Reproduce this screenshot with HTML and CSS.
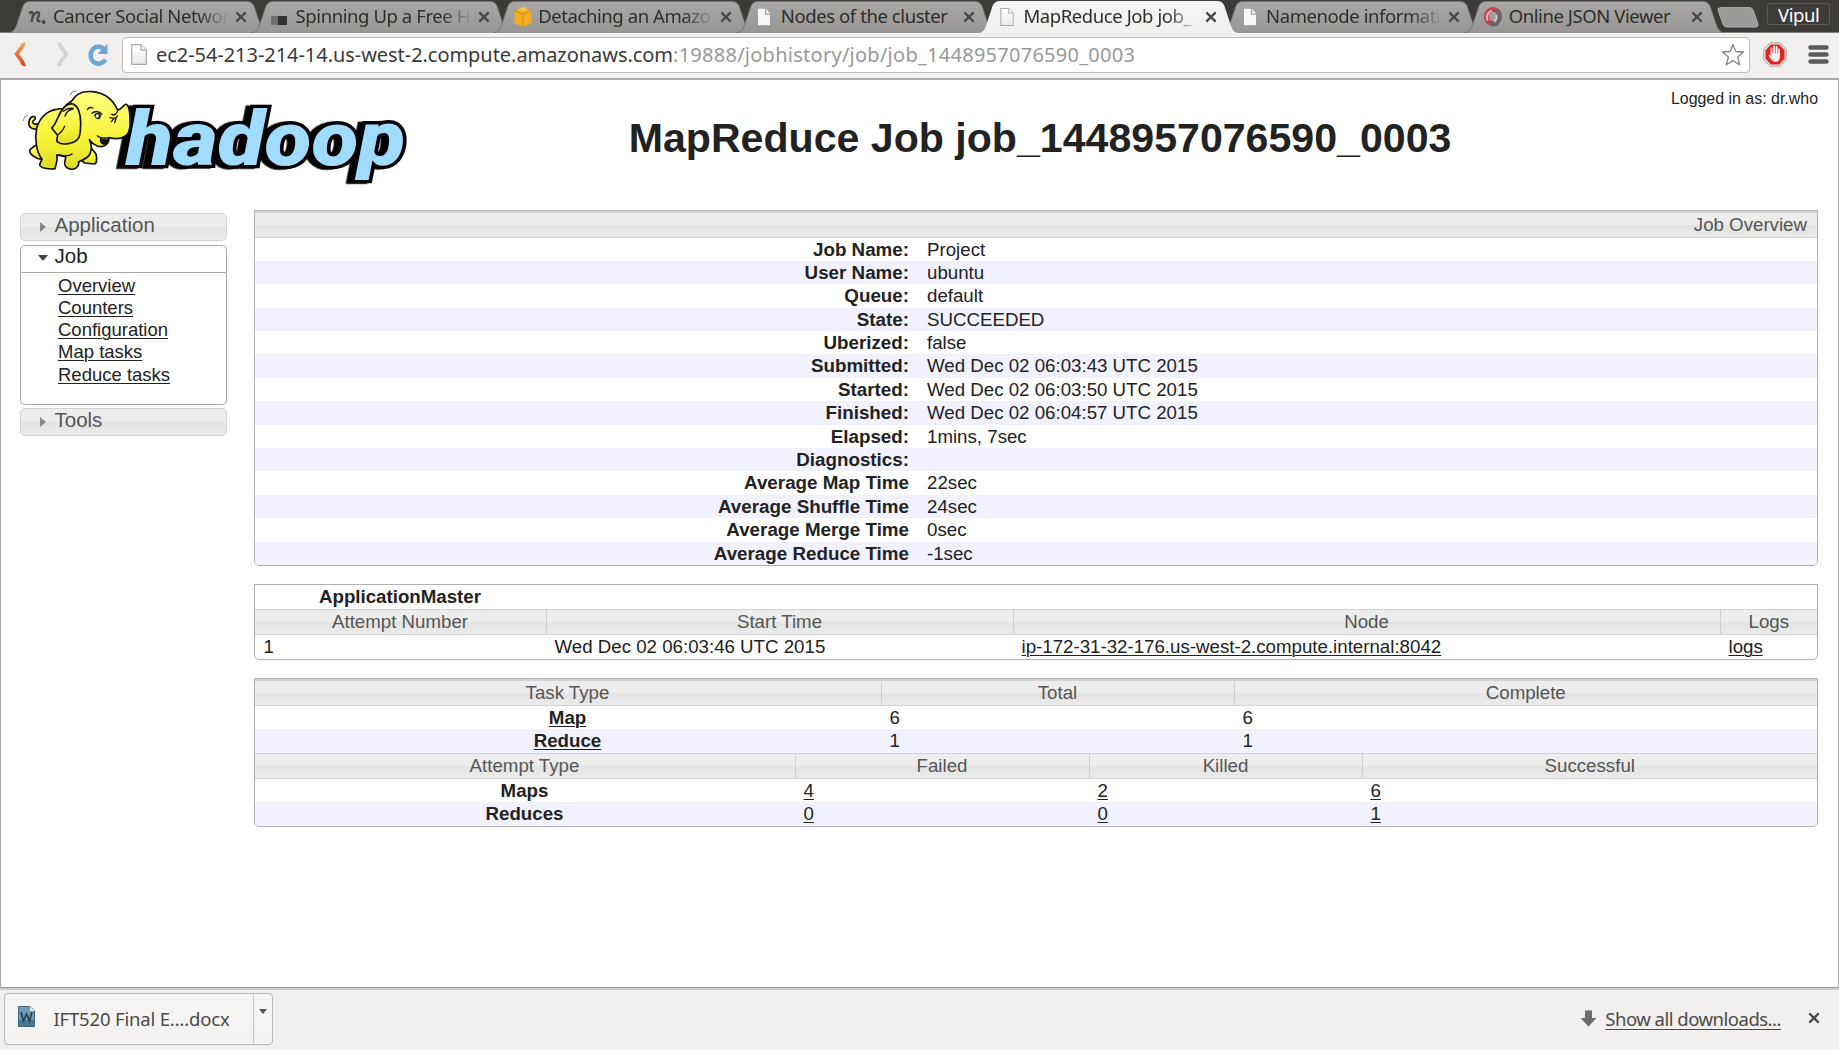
FILE: index.html
```html
<!DOCTYPE html>
<html lang="en">
<head>
<meta charset="utf-8">
<title>MapReduce Job job_1448957076590_0003</title>
<link rel="stylesheet" href="styles.css">
</head>
<body>
<svg class="defs" width="0" height="0">
  <defs>
    <linearGradient id="tab-grey" x1="0" y1="0" x2="0" y2="1"><stop offset="0" stop-color="#a9a8a6"/><stop offset="1" stop-color="#979694"/></linearGradient>
    <linearGradient id="tab-light" x1="0" y1="0" x2="0" y2="1"><stop offset="0" stop-color="#f6f5f4"/><stop offset="1" stop-color="#f1f0ee"/></linearGradient>
    <linearGradient id="page-fill" x1="0" y1="0" x2="0" y2="1"><stop offset="0" stop-color="#fff"/><stop offset="1" stop-color="#e9e9e9"/></linearGradient>
    <linearGradient id="orange" x1="0" y1="0" x2="0" y2="1"><stop offset="0" stop-color="#efa35c"/><stop offset="1" stop-color="#e2431b"/></linearGradient>
    <linearGradient id="skin" x1="0" y1="0" x2="0" y2="1"><stop offset="0" stop-color="#ffff86"/><stop offset=".6" stop-color="#f8f436"/><stop offset="1" stop-color="#e0dc28"/></linearGradient>
    <symbol id="tab-shape" viewBox="0 0 261 33" preserveAspectRatio="none"><path d="M0 33C6 32 7 29 9 24L15 6Q17 1.500 22 1.500H239Q244 1.500 246 6L252 24C254 29 255 32 261 33"/></symbol>
    <symbol id="page" viewBox="0 0 16 21"><path d="M.7.700H10L15.300 6V20.300H.700Z" fill="url(#page-fill)" stroke="#aaa" stroke-width="1.200"/><path d="M10 .700V6H15.300" fill="#fff" stroke="#999"/></symbol>
    <symbol id="page-white" viewBox="0 0 16 21"><path d="M1 1H9V8H15V20H1ZM10.500 1L15 6.500H10.500Z" fill="#f7f7f7"/></symbol>
    <symbol id="close" viewBox="0 0 12 12"><path d="M2 2L10 10M10 2L2 10" stroke="currentColor" stroke-width="2" fill="none"/></symbol>
  </defs>
</svg>
<header class="strip">
  <div class="tab"><svg class="shape"><use href="#tab-shape"/></svg>
    <svg class="fav" viewBox="0 0 18 18"><path d="M1 5L4 4Q6 5 3.500 14M4.500 9Q8 2.500 11 5Q11.500 7 9.500 11Q9 14.500 12.500 12.500" fill="none" stroke="#4b4b4b" stroke-width="2.400"/><circle cx="15.700" cy="14" r="1.900" fill="#444"/></svg>
    <span class="title fade">Cancer Social Networ</span><svg class="x"><use href="#close"/></svg></div>
  <div class="tab"><svg class="shape"><use href="#tab-shape"/></svg>
    <svg class="fav" viewBox="0 0 18 18"><path fill="#a3a5a3" d="M9 0H17V8H9Z"/><path fill="#6f716f" d="M1 8H9V17H1Z"/><path fill="#333" d="M8 8H17V17H8Z"/></svg>
    <span class="title fade">Spinning Up a Free H</span><svg class="x"><use href="#close"/></svg></div>
  <div class="tab"><svg class="shape"><use href="#tab-shape"/></svg>
    <svg class="fav cube" viewBox="0 0 19 21"><path fill="#f5ae22" d="M1 5L9.500 1L18 5V17L9.500 21L1 17Z"/><path d="M1 5L9.500 8L18 5M9.500 8V21" stroke="#c98a1e" fill="none"/><path fill="#ffc551" d="M5 3.500L9.500 5L14 3.500L9.500 1Z"/></svg>
    <span class="title fade">Detaching an Amazo</span><svg class="x"><use href="#close"/></svg></div>
  <div class="tab"><svg class="shape"><use href="#tab-shape"/></svg>
    <svg class="fav"><use href="#page-white"/></svg>
    <span class="title">Nodes of the cluster</span><svg class="x"><use href="#close"/></svg></div>
  <div class="tab active"><svg class="shape"><use href="#tab-shape"/></svg>
    <svg class="fav"><use href="#page"/></svg>
    <span class="title fade">MapReduce Job job_</span><svg class="x"><use href="#close"/></svg></div>
  <div class="tab"><svg class="shape"><use href="#tab-shape"/></svg>
    <svg class="fav"><use href="#page-white"/></svg>
    <span class="title fade">Namenode informati</span><svg class="x"><use href="#close"/></svg></div>
  <div class="tab"><svg class="shape"><use href="#tab-shape"/></svg>
    <svg class="fav ring" viewBox="0 0 21 21"><ellipse cx="10.500" cy="10.500" rx="7" ry="7.500" fill="none" stroke="#c23d4c" stroke-width="5"/><path d="M8 18C18 21 20 8 14 4" fill="none" stroke="#666" stroke-width="4.500"/><path d="M5 15Q2 8 9 4" fill="none" stroke="#e9b4b8" stroke-width="2"/><path d="M12 16Q15 13 14 9" fill="none" stroke="#ccc" stroke-width="2"/></svg>
    <span class="title">Online JSON Viewer</span><svg class="x"><use href="#close"/></svg></div>
  <svg class="newtab" viewBox="0 0 42 21"><path d="M4 .700H33Q35 .700 36 3L41 17Q41.500 20 39 20H10Q7 20 6 17L1 3Q.500 .700 4 .700Z" fill="#9b9a98" stroke="#b4b3b1"/></svg>
  <span class="user">Vipul</span>
</header>
<nav class="toolbar">
  <svg class="back" viewBox="0 0 14 26"><path d="M11.500 2.500Q9 2 8 5L2.500 12.500L8 20Q9 24 11.500 23" fill="none" stroke="url(#orange)" stroke-width="4"/></svg>
  <svg class="fwd" viewBox="0 0 14 26"><path d="M2.500 2.500Q5 2 6 5L11.500 12.500L6 20Q5 24 2.500 23" fill="none" stroke="#d5d4d1" stroke-width="4"/></svg>
  <svg class="reload" viewBox="0 0 22 23"><path d="M16.500 5.500A8 8.500 0 1 0 18.500 16.500" fill="none" stroke="#6fa3d8" stroke-width="4.500"/><path d="M20.500 1V11H10.500Z" fill="#6fa3d8"/></svg>
  <div class="omnibox">
    <svg class="pageicon"><use href="#page"/></svg>
    <span class="url"><span class="host">ec2-54-213-214-14.us-west-2.compute.amazonaws.com</span><span class="path">:19888/jobhistory/job/job_1448957076590_0003</span></span>
    <svg class="star" viewBox="0 0 24 24"><path d="M12 1.500L14.800 8.500L22.500 9L16.600 14L18.700 21.800L12 17.600L5.300 21.800L7.400 14L1.500 9L9.200 8.500Z" fill="#fff" stroke="#858585" stroke-width="1.300" stroke-linejoin="round"/></svg>
  </div>
  <svg class="stop" viewBox="0 0 24 25"><path d="M7 .700H17L23.300 7.500V17.500L17 24.300H7L.700 17.500V7.500Z" fill="#ddd" stroke="#aaa"/><path d="M8 2.500H16L21.500 8.500V16.500L16 22.500H8L2.500 16.500V8.500Z" fill="#e6211d"/><path d="M8.500 13V6.500M11 12V4.500M13.500 12V5M16 13V7.500" stroke="#fff" stroke-width="1.800" stroke-linecap="round"/><path d="M7.600 11H17V15Q16.500 20 12.500 20Q9 20 5.500 13.500Q6.500 12 8 14Z" fill="#f7eeee"/></svg>
  <svg class="menu" viewBox="0 0 21 19"><path d="M2.500 2.500H18.500M2.500 9.500H18.500M2.500 16.500H18.500" stroke="#5b5b5b" stroke-width="4.400" stroke-linecap="round"/></svg>
</nav>
<main class="page">
  <div class="top">
    <svg class="logo" viewBox="60 35 1175 285">
      <text class="word" x="378" y="267" textLength="838" lengthAdjust="spacingAndGlyphs">hadoop</text>
      <g fill="url(#skin)" stroke="#111" stroke-width="5" stroke-linejoin="round" stroke-linecap="round">
        <path d="M110 158C92 160 82 148 88 132C92 119 106 117 106 126C106 133 97 130 98 137C99 144 106 145 115 142Z"/>
        <path d="M106 207L90 220C86 231 104 247 126 250L126 215Z"/>
        <path d="M272 213L288 233C292 252 290 262 282 263L255 260L240 250Z"/>
        <path d="M110 155C124 112 150 98 190 97C196 86 206 80 215 74C228 51 250 43 278 46C315 50 338 68 352 100C364 104 370 82 378 84C390 88 391 125 390 145C390 178 368 194 326 184C329 202 312 216 292 209C282 205 274 198 268 190C276 205 275 220 270 233C262 247 246 252 236 256C238 272 222 285 202 275C186 264 198 252 197 241L170 236C175 252 166 268 165 277C148 280 118 275 119 264L126 249C110 227 103 190 110 155Z"/>
        <path d="M214 82C234 84 242 112 242 140C242 163 241 184 232 190C216 204 184 207 173 197C164 190 177 180 172 176L155 155C173 140 173 110 194 92Q202 83 214 82Z"/>
        <path fill="#fffdb5" stroke-width="4" d="M172 176Q186 168 194 150M190 105Q208 91 220 97M195 119Q202 100 218 98"/>
        <path fill="none" stroke-width="4" d="M174 235Q203 243 216 233M262 100Q267 90 279 95M330 124Q347 130 352 119M335 114Q348 120 353 103M334 136L342 127M344 139L348 126M292 178Q300 186 323 185M276 111Q289 99 306 113"/>
        <path fill="none" stroke="#888" stroke-width="3" d="M211 56L216 47L229 44M70 133L74 121L83 118"/>
        <path fill="#111" stroke="none" d="M282 116Q292 103 304 116L299 128Q287 130 285 122ZM296 181Q310 192 326 187Q325 208 309 205Q296 199 300 186Z"/>
        <circle cx="292" cy="119" r="5" fill="#fff" stroke="none"/>
      </g>
    </svg>
    <h1>MapReduce Job job_1448957076590_0003</h1>
    <div class="login">Logged in as: dr.who</div>
  </div>
  <div class="body">
    <aside class="side">
      <h3><svg class="arr" viewBox="0 0 6 10"><path d="M0 0L6 5L0 10Z" fill="#888"/></svg>Application</h3>
      <h3 class="open"><svg class="arr down" viewBox="0 0 10 6"><path d="M0 0H10L5 6Z" fill="#444"/></svg>Job</h3>
      <ul><li><a>Overview</a></li><li><a>Counters</a></li><li><a>Configuration</a></li><li><a>Map tasks</a></li><li><a>Reduce tasks</a></li></ul>
      <h3><svg class="arr" viewBox="0 0 6 10"><path d="M0 0L6 5L0 10Z" fill="#888"/></svg>Tools</h3>
    </aside>
    <div class="content">
      <section class="box overview">
        <div class="bar first"><span class="right">Job Overview</span></div>
        <div class="row"><b>Job Name:</b><span>Project</span></div>
        <div class="row"><b>User Name:</b><span>ubuntu</span></div>
        <div class="row"><b>Queue:</b><span>default</span></div>
        <div class="row"><b>State:</b><span>SUCCEEDED</span></div>
        <div class="row"><b>Uberized:</b><span>false</span></div>
        <div class="row"><b>Submitted:</b><span>Wed Dec 02 06:03:43 UTC 2015</span></div>
        <div class="row"><b>Started:</b><span>Wed Dec 02 06:03:50 UTC 2015</span></div>
        <div class="row"><b>Finished:</b><span>Wed Dec 02 06:04:57 UTC 2015</span></div>
        <div class="row"><b>Elapsed:</b><span>1mins, 7sec</span></div>
        <div class="row"><b>Diagnostics:</b><span></span></div>
        <div class="row"><b>Average Map Time</b><span>22sec</span></div>
        <div class="row"><b>Average Shuffle Time</b><span>24sec</span></div>
        <div class="row"><b>Average Merge Time</b><span>0sec</span></div>
        <div class="row"><b>Average Reduce Time</b><span>-1sec</span></div>
      </section>
      <section class="box master">
        <div class="cols am"><b>ApplicationMaster</b></div>
        <div class="cols bar"><span>Attempt Number</span><span>Start Time</span><span>Node</span><span>Logs</span></div>
        <div class="cols data"><span>1</span><span>Wed Dec 02 06:03:46 UTC 2015</span><span><a>ip-172-31-32-176.us-west-2.compute.internal:8042</a></span><span><a>logs</a></span></div>
      </section>
      <section class="box tasks">
        <div class="cols three bar first"><span>Task Type</span><span>Total</span><span>Complete</span></div>
        <div class="cols three data"><b><a>Map</a></b><span>6</span><span>6</span></div>
        <div class="cols three data alt"><b><a>Reduce</a></b><span>1</span><span>1</span></div>
        <div class="cols four bar"><span>Attempt Type</span><span>Failed</span><span>Killed</span><span>Successful</span></div>
        <div class="cols four data"><b>Maps</b><span><a>4</a></span><span><a>2</a></span><span><a>6</a></span></div>
        <div class="cols four data alt"><b>Reduces</b><span><a>0</a></span><span><a>0</a></span><span><a>1</a></span></div>
      </section>
    </div>
  </div>
</main>
<footer class="downloads">
  <div class="item">
    <div class="file"><svg class="doc" viewBox="0 0 17 21"><path d="M.500.500H12L16.500 5V20.500H.500Z" fill="#6f9db3" stroke="#3d6880"/><path d="M1 14H16V20H1Z" fill="#4a7690"/><path d="M12 .500L16.500 5H12Z" fill="#e8eef2"/><path d="M3 6L5.500 15L8.500 8L11.500 15L14 6" fill="none" stroke="#253d4c" stroke-width="1.600"/></svg><span class="name">IFT520 Final E….docx</span></div>
    <div class="more"><svg viewBox="0 0 8 5"><path d="M0 0H8L4 5Z" fill="#555"/></svg></div>
  </div>
  <svg class="dl" viewBox="0 0 17 17"><path d="M5 .500H12V8H16.500L8.500 16.500L.500 8H5Z" fill="#6b6b6b"/></svg>
  <a class="all">Show all downloads...</a>
  <svg class="x"><use href="#close"/></svg>
</footer>
</body>
</html>
```
FILE: styles.css
```css
* { box-sizing: border-box; }
body { margin: 0; width: 1839px; height: 1050px; overflow: hidden; display: flex; flex-direction: column; background: #f1f0ee; font: 18.7px "Liberation Sans", Arial, sans-serif; color: #222; }
.defs { position: absolute; }
svg { display: block; flex: none; overflow: visible; }
a { text-decoration: underline; text-decoration-thickness: 1px; text-underline-offset: 2px; }

.strip { height: 33px; flex: none; display: flex; padding-left: 8px; background: #3c3b37; border-bottom: 1px solid #807f7c; font: 18.5px "Noto Sans", sans-serif; letter-spacing: -.42px; }
.tab { position: relative; flex: none; width: 261px; height: 33px; margin-right: -18.400px; display: flex; align-items: center; padding-left: 19.500px; color: #302d27; }
.tab > * { position: relative; }
.tab .shape { position: absolute; left: 0; top: 0; width: 261px; height: 33px; fill: url(#tab-grey); stroke: #777673; }
.tab.active { z-index: 1; }
.tab.active .shape { fill: url(#tab-light); stroke: #f4f3f2; height: 34px; }
.fav { width: 18px; height: 18px; }
.fav.cube, .fav.ring { width: 20px; height: 21px; }
.title { position: absolute !important; left: 45px; top: 2px; width: 178px; line-height: 28px; white-space: nowrap; }
.fade { mask-image: linear-gradient(90deg, #000 145px, transparent 176px); }
.x { width: 14px; height: 14px; color: #4b4a47; }
.tab .x { position: absolute; left: 226px; top: 10px; }
.newtab { width: 42px; height: 21px; margin: 7px 0 0 11px; }
.user { width: 63px; height: 22px; margin: 3px 0 0 8px; border: 1px solid #5b5a56; border-radius: 3px; color: #fff; text-align: center; line-height: 21px; }

.toolbar { height: 47px; flex: none; display: flex; align-items: center; padding: 0 9px 2px 13.500px; border-bottom: 2px solid #aaa; }
.back { width: 14px; height: 25px; margin-right: 27px; }
.fwd { width: 14px; height: 25px; margin-right: 18px; }
.reload { width: 22px; height: 23px; margin-right: 13.500px; }
.omnibox { width: 1628px; height: 36px; display: flex; align-items: center; padding: 0 4px 0 8px; background: #fff; border: 1px solid #bdbcba; border-radius: 4px; }
.pageicon { width: 16px; height: 21px; margin-right: 9px; }
.url { flex: 1; font: 20px "Noto Sans", sans-serif; white-space: nowrap; color: #3a3a3a; }
.host { letter-spacing: -.05px; }
.path { color: #999; letter-spacing: .26px; }
.star { width: 24px; height: 24px; }
.stop { width: 24px; height: 25px; margin-left: 12.500px; }
.menu { width: 21px; height: 19px; margin-left: 21px; }

.page { height: 908px; flex: none; background: #fff; border: 1px solid #aaa; border-top: 0; border-bottom-color: #999; padding: 0 20px 0 18.500px; }
.top { display: flex; height: 130px; }
.logo { width: 391.700px; height: 95px; margin-top: 7.700px; }
.word { font: italic 900 228px Roboto, "Liberation Sans", sans-serif; fill: #9fdcff; stroke: #000; stroke-width: 20px; paint-order: stroke; filter: drop-shadow(-14px 2px 0 #000); }
h1 { margin: 0 0 0 217.500px; font-size: 41.120px; line-height: 48px; padding-top: 34px; white-space: nowrap; }
.login { margin-left: auto; font-size: 15.950px; line-height: 18px; padding-top: 10px; }
.body { display: flex; gap: 27px; }
.side { width: 207px; padding-top: 3px; flex: none; }
h3 { margin: 0 0 3.500px; height: 28px; display: flex; align-items: center; padding: 0 0 6px 19px; font-size: 20.500px; font-weight: normal; line-height: 21px; color: #555; border: 1px solid #d3d3d3; border-radius: 5px; background: linear-gradient(#ededed 50%, #e3e3e3 50%, #ebebeb); }
h3.open { margin: 0; color: #222; background: #fff; border-color: #aaa; border-radius: 5px 5px 0 0; }
.arr { width: 6px; height: 10px; margin: 6px 9px 0 0; }
.arr.down { width: 10px; height: 6px; margin: 4px 7px 0 -2px; }
.side ul { list-style: none; margin: 0 0 3.500px; height: 132px; padding: 2px 0 0 37.500px; border: 1px solid #aaa; border-top: 0; border-radius: 0 0 5px 5px; font-size: 18.500px; line-height: 22.300px; }
.content { flex: 1; }
.box { border: 1px solid #b2b2b2; border-radius: 0 0 5px 5px; overflow: hidden; margin-bottom: 18.500px; line-height: 23.400px; white-space: nowrap; }
.bar { height: 26px; color: #555; border: solid #d3d3d3; border-width: 1px 0; background: linear-gradient(#ededed 50%, #e3e3e3 50%, #ebebeb); }
.bar.first { height: 26.500px; border-top-width: 2px; }
.right { display: block; text-align: right; padding-right: 10px; }
.row { height: 23.400px; display: grid; grid-template-columns: 663px 1fr; }
.row:nth-child(odd) { background: #f2f2ff; }
.row b { text-align: right; padding-right: 8.500px; font-size: 18.800px; }
.row span { padding-left: 9.500px; }
.cols { display: grid; grid-template-columns: 291px 467px 707px 1fr; text-align: center; }
.three { grid-template-columns: 626px 353px 1fr; }
.four { grid-template-columns: 540px 294px 273px 1fr; }
.am { height: 24px; line-height: 23px; }
.bar span + span { border-left: 1px solid #cfcfcf; }
.data { height: 23.500px; }
.data span { text-align: left; padding-left: 9px; }
.alt { background: #f2f2ff; }

.downloads { flex: 1; display: flex; align-items: center; padding: 3px 18px 6px 4px; border-top: 2px solid #ccc; font: 18.500px "Noto Sans", sans-serif; color: #4b4a48; }
.item { width: 269px; height: 52px; display: flex; border: 1px solid #bab9b7; border-radius: 4px; background: linear-gradient(#f7f6f5, #f3f2f1); }
.file { width: 249px; display: flex; align-items: center; padding: 0 0 2px 13px; border-right: 1px solid #c9c8c6; }
.name { letter-spacing: -.18px; }
.all { letter-spacing: -.5px; margin-top: -2px; text-underline-offset: 3px; }
.doc { width: 17px; height: 21px; margin: -4px 18.500px 0 0; }
.more svg { width: 8px; height: 5px; margin: 15px 0 0 5px; }
.dl { width: 17px; height: 17px; margin: -2px 8px 0 auto; }
.downloads .x { margin: -2px 0 0 26px; }
```
